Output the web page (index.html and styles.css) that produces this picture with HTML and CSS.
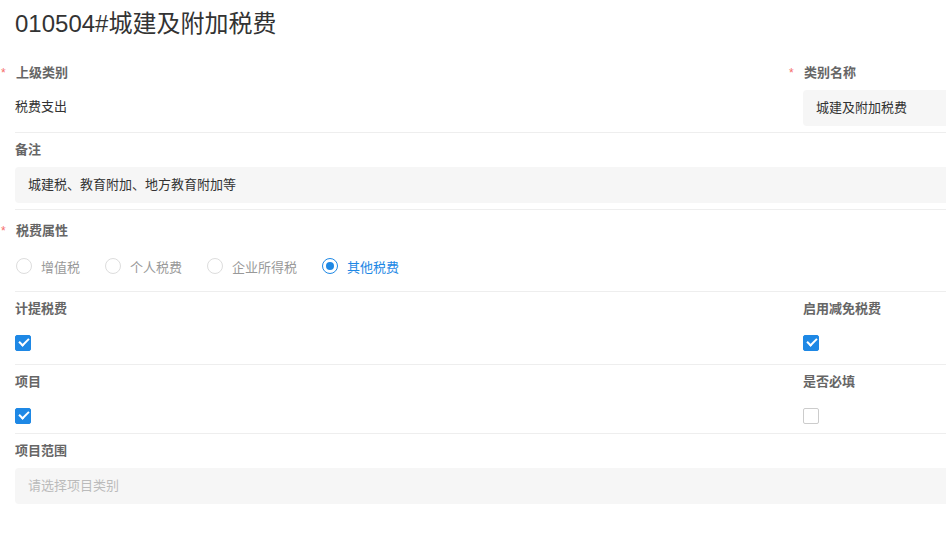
FILE: index.html
```html
<!DOCTYPE html>
<html lang="zh-CN">
<head>
  <meta charset="UTF-8" />
  <title>010504#城建及附加税费</title>
  <link rel="stylesheet" href="styles.css">
</head>
<body>
  <main class="page">
    <h1 class="title">010504#城建及附加税费</h1>

    <div class="form">
      <div class="row">
        <div class="field">
          <div class="label req">上级类别</div>
          <div class="control text"><span class="value">税费支出</span></div>
        </div>
        <div class="field">
          <div class="label req">类别名称</div>
          <div class="control"><div class="input">城建及附加税费</div></div>
        </div>
      </div>

      <div class="row">
        <div class="field wide">
          <div class="label">备注</div>
          <div class="control"><div class="input">城建税、教育附加、地方教育附加等</div></div>
        </div>
      </div>

      <div class="row row-radio">
        <div class="field wide">
          <div class="label req">税费属性</div>
          <div class="control radios">
            <label class="radio"><span class="dot"></span>增值税</label>
            <label class="radio"><span class="dot"></span>个人税费</label>
            <label class="radio"><span class="dot"></span>企业所得税</label>
            <label class="radio checked"><span class="dot"></span>其他税费</label>
          </div>
        </div>
      </div>

      <div class="row row-check">
        <div class="field">
          <div class="label">计提税费</div>
          <div class="control small"><span class="check on"></span></div>
        </div>
        <div class="field">
          <div class="label">启用减免税费</div>
          <div class="control small"><span class="check on"></span></div>
        </div>
      </div>

      <div class="row row-check last">
        <div class="field">
          <div class="label">项目</div>
          <div class="control small"><span class="check on"></span></div>
        </div>
        <div class="field">
          <div class="label">是否必填</div>
          <div class="control small"><span class="check"></span></div>
        </div>
      </div>

      <div class="row plain">
        <div class="field wide">
          <div class="label">项目范围</div>
          <div class="control"><div class="input placeholder">请选择项目类别</div></div>
        </div>
      </div>
    </div>
  </main>
</body>
</html>
```

FILE: styles.css
```css
* {
  box-sizing: border-box;
  margin: 0;
  padding: 0;
}

html, body {
  height: 100%;
  overflow: hidden;
  background: #fff;
  font-family: "Liberation Sans", "Noto Sans CJK SC", sans-serif;
  font-size: 13px;
  color: #333;
}

.page {
  padding-left: 15px;
  width: 1560px;
}

.title {
  font-size: 24px;
  font-weight: normal;
  line-height: 32px;
  padding-top: 8px;
  margin-bottom: 16px;
  color: #333;
}

.row {
  display: grid;
  grid-template-columns: 788px 1fr;
  padding: 8px 0 6px;
  border-bottom: 1px solid #eee;
}

.row-radio {
  padding: 12px 0 7px;
}

.row-check {
  padding-bottom: 4px;
}

.row-check.last {
  padding-bottom: 0;
}

.row.plain {
  border-bottom: none;
}

.field.wide {
  grid-column: 1 / 3;
}

.label {
  font-weight: bold;
  color: #666;
  line-height: 18px;
  margin-bottom: 8px;
}

.req::before {
  content: "*";
  display: inline-block;
  width: 15px;
  margin-left: -15px;
  padding-left: 1px;
  color: #f56c6c;
  font-weight: normal;
  font-size: 12px;
  vertical-align: top;
  text-align: left;
}

.control {
  height: 36px;
  display: flex;
  align-items: center;
}

.control.text {
  padding-bottom: 5px;
}

.control.small {
  height: 34px;
}

.input {
  width: 100%;
  height: 36px;
  line-height: 36px;
  padding: 0 13px;
  background: #f6f6f6;
  border-radius: 4px;
  color: #333;
}

.input.placeholder {
  color: #bbb;
}

.radios {
  padding-left: 1px;
}

.radio {
  display: flex;
  align-items: center;
  color: #999;
  margin-right: 25px;
}

.radio .dot {
  width: 16px;
  height: 16px;
  border: 1px solid #ddd;
  border-radius: 50%;
  margin-right: 9px;
  display: flex;
  align-items: center;
  justify-content: center;
}

.radio.checked {
  color: #1e88e5;
}

.radio.checked .dot {
  border-color: #1e88e5;
}

.radio.checked .dot::after {
  content: "";
  width: 8px;
  height: 8px;
  border-radius: 50%;
  background: #1e88e5;
}

.check {
  width: 16px;
  height: 16px;
  border: 1px solid #ccc;
  border-radius: 2px;
  background: #fff;
  position: relative;
}

.check.on {
  background: #1e88e5;
  border-color: #1e88e5;
}

.check.on::after {
  content: "";
  position: absolute;
  left: 3px;
  top: 2px;
  width: 8px;
  height: 4px;
  border-left: 2px solid #fff;
  border-bottom: 2px solid #fff;
  transform: rotate(-45deg);
}
```
